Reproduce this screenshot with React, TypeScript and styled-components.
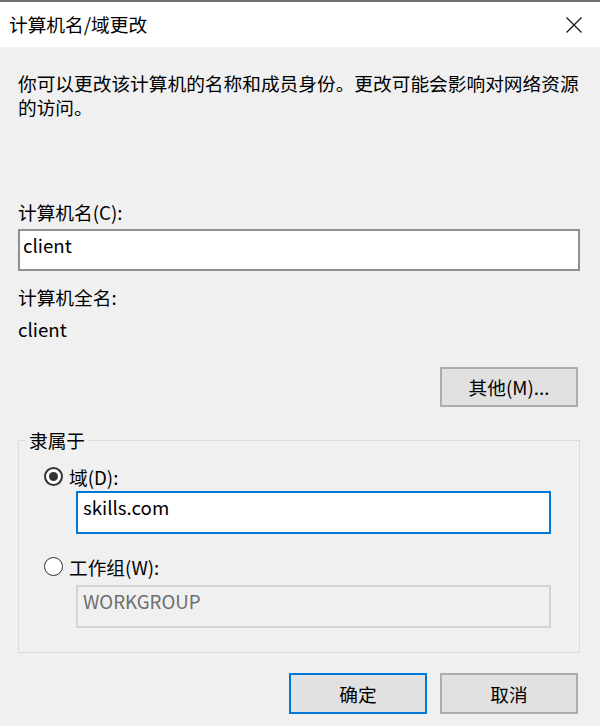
import * as React from 'react';
import styled, { createGlobalStyle } from 'styled-components';

const GlobalStyle = createGlobalStyle`
	html, body {
		margin: 0;
		padding: 0;
		background: #f0f0f0;
	}
	body {
		font-family: "Noto Sans CJK SC", "Noto Sans", sans-serif;
		font-size: 18.7px;
		color: #000;
	}
`;

const Window = styled.div`
	width: 600px;
	height: 726px;
	box-sizing: border-box;
	background: #f0f0f0;
	border-top: 2px solid #6f6f6f;
	overflow: hidden;
`;

const TitleBar = styled.div`
	height: 45px;
	background: #fff;
	display: flex;
	align-items: center;
	justify-content: space-between;
	padding: 0 18px 0 9px;
`;

const Title = styled.span`
	line-height: 24px;
	margin-top: -1px;
`;

const CloseButton = styled.div`
	width: 16px;
	height: 16px;
	display: flex;
	margin-top: 1px;
`;

const Body = styled.div`
	padding: 0 20px 0 18px;
	display: flex;
	flex-direction: column;
`;

const Description = styled.p`
	margin: 24px 0 0;
	line-height: 24px;
`;

const Label = styled.div<{ $top: number }>`
	margin-top: ${p => p.$top}px;
	line-height: 24px;
	white-space: nowrap;
`;

const TextBox = styled.div<{ $variant?: 'normal' | 'focused' | 'disabled'; $height?: number }>`
	box-sizing: border-box;
	height: ${p => p.$height || 42}px;
	padding: 2px 5px;
	line-height: 24px;
	background: ${p => (p.$variant === 'disabled' ? '#f0f0f0' : '#fff')};
	color: ${p => (p.$variant === 'disabled' ? '#6d6d6d' : '#000')};
	border: 2px solid
		${p => (p.$variant === 'focused' ? '#0078d7' : p.$variant === 'disabled' ? '#d4d4d4' : '#8f8f8f')};
`;

const NameBox = styled(TextBox)`
	margin-top: 5px;
	padding-left: 3px;
`;

const ButtonRow = styled.div<{ $top: number }>`
	display: flex;
	justify-content: flex-end;
	gap: 13px;
	margin-top: ${p => p.$top}px;
	padding-right: 2px;
`;

const Button = styled.div<{ $default?: boolean }>`
	box-sizing: border-box;
	width: 138px;
	height: 41px;
	display: flex;
	align-items: center;
	justify-content: center;
	background: #e1e1e1;
	border: 2px solid ${p => (p.$default ? '#0078d7' : '#adadad')};
	line-height: 24px;
`;

const GroupBox = styled.fieldset`
	margin: 21px 0 0;
	padding: 0 0 24px;
	border: 1px solid #dcdcdc;
	min-width: 0;
`;

const Legend = styled.legend`
	margin-left: 7px;
	padding: 0 3px;
	line-height: 24px;
`;

const RadioRow = styled.div<{ $top: number }>`
	display: flex;
	align-items: center;
	gap: 6px;
	height: 24px;
	margin-top: ${p => p.$top}px;
	padding-left: 25px;
`;

const RadioCircle = styled.span<{ $checked?: boolean }>`
	box-sizing: border-box;
	width: 19px;
	height: 19px;
	border-radius: 50%;
	background: #fff;
	border: ${p => (p.$checked ? '2px solid #333' : '1.5px solid #333')};
	display: flex;
	align-items: center;
	justify-content: center;
	&::after {
		content: '';
		display: ${p => (p.$checked ? 'block' : 'none')};
		width: 9px;
		height: 9px;
		border-radius: 50%;
		background: #333;
	}
`;

const GroupInput = styled(TextBox)<{ $top: number }>`
	margin: ${p => p.$top}px 0 0 57px;
	width: 475px;
`;

const Radio = ({ checked, label, top }: { checked?: boolean; label: string; top: number }) => (
	<RadioRow $top={top}>
		<RadioCircle $checked={checked} />
		<span>{label}</span>
	</RadioRow>
);

export default function App() {
	return (
		<>
			<GlobalStyle />
			<Window>
				<TitleBar>
					<Title>计算机名/域更改</Title>
					<CloseButton>
						<svg width="16" height="16" viewBox="0 0 16 16">
							<path d="M0.5 0.5 L15.5 15.5 M15.5 0.5 L0.5 15.5" stroke="#111" strokeWidth="1.2" fill="none" />
						</svg>
					</CloseButton>
				</TitleBar>
				<Body>
					<Description>你可以更改该计算机的名称和成员身份。更改可能会影响对网络资源的访问。</Description>
					<Label $top={81}>计算机名(C):</Label>
					<NameBox>client</NameBox>
					<Label $top={14}>计算机全名:</Label>
					<Label $top={8}>client</Label>
					<ButtonRow $top={26}>
						<Button style={{ height: 40 }}>其他(M)...</Button>
					</ButtonRow>
					<GroupBox>
						<Legend>隶属于</Legend>
						<Radio checked label="域(D):" top={12} />
						<GroupInput $variant="focused" $height={43} $top={3}>
							skills.com
						</GroupInput>
						<Radio label="工作组(W):" top={20} />
						<GroupInput $variant="disabled" $height={43} $top={7}>
							WORKGROUP
						</GroupInput>
					</GroupBox>
					<ButtonRow $top={20}>
						<Button $default>确定</Button>
						<Button>取消</Button>
					</ButtonRow>
				</Body>
			</Window>
		</>
	);
}
